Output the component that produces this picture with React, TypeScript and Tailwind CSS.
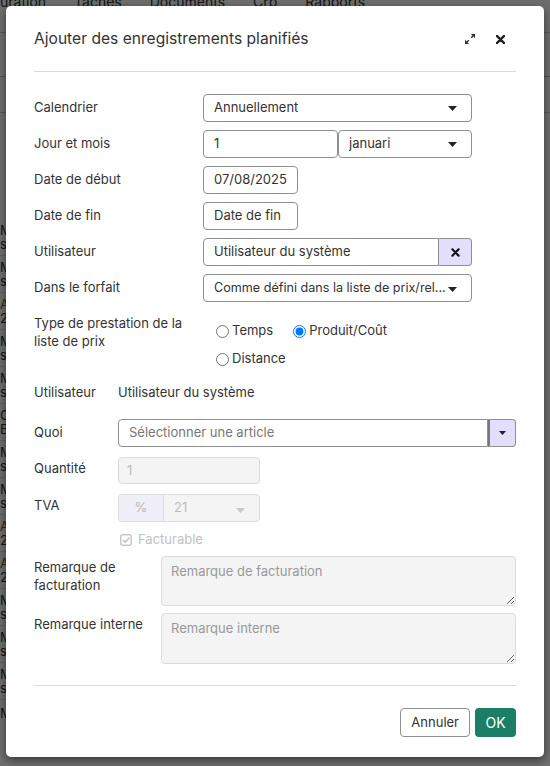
import React from 'react';

const rows = [
  ['Mission', 'statut'], ['Mission', 'statut'], ['Activité', '2025'], ['Mission', 'statut'], ['Mission', 'statut'],
  ['Contrat', 'BT'], ['Mission', 'statut'], ['Mission', 'statut'], ['Activité', '2025'], ['Activité', '2025'],
  ['Mission', 'statut'], ['Mission', 'statut'], ['Mission', 'statut'],
];

function Caret({ light = false }: { light?: boolean }) {
  return (
    <svg width="9" height="5" viewBox="0 0 9 5" className="shrink-0">
      <path d="M0 0 H9 L4.5 5 Z" fill={light ? '#c8c8c8' : '#222'} />
    </svg>
  );
}

function FakeSelect({ value, className = '' }: { value: string; className?: string }) {
  return (
    <div className={`h-[28px] flex items-center justify-between pl-[10px] pr-[14px] border border-[#8f8f8f] rounded-[4px] bg-white ${className}`}>
      <span className="truncate">{value}</span>
      <Caret />
    </div>
  );
}

function FakeInput({ value, className = '' }: { value: string; className?: string }) {
  return (
    <div className={`h-[28px] flex items-center px-[10px] border border-[#8f8f8f] rounded-[4px] bg-white ${className}`}>
      {value}
    </div>
  );
}

function Row({ label, children }: { label: React.ReactNode; children: React.ReactNode }) {
  return (
    <div className="flex">
      <div className="w-[169px] shrink-0 pt-[4px] leading-[18px]">{label}</div>
      <div className="w-[269px] shrink-0">{children}</div>
    </div>
  );
}

export default function App() {
  return (
    <div className="relative w-[550px] h-[766px] overflow-hidden bg-white text-[#222]" style={{ fontFamily: 'Inter, "Noto Sans", sans-serif' }}>
      {/* page behind the dialog */}
      <div className="flex gap-[28px] -mt-[9px] h-[42px] items-start text-[14px] text-[#333] border-b border-[#ccc]">
        <span>uration</span>
        <span>Tâches</span>
        <span>Documents</span>
        <span>Crb</span>
        <span>Rapports</span>
      </div>
      <div className="h-[44px] border-b border-[#bbb]" />
      <div className="h-[36px] border-b border-[#ccc]" />
      <div className="h-[106px]" />
      {rows.map((r, i) => (
        <div key={i} className="w-[20px] h-[37px] overflow-hidden border-b border-[#ddd] text-[13px] leading-[14px] text-[#333] flex flex-col justify-center">
          <span className={r[0] === 'Activité' ? 'text-[#7a5a2a]' : ''}>{r[0].slice(0, 2)}</span>
          <span>{r[1].slice(0, 2)}</span>
        </div>
      ))}
      <div className="text-[13px] text-[#333] pt-[4px]">Mission</div>

      {/* overlay + dialog */}
      <div className="absolute inset-0 bg-black/[0.57] pl-[6px] pt-[6px]">
        <div className="w-[538px] h-[751px] bg-white rounded-[5px] shadow-[0_3px_9px_rgba(0,0,0,0.5)] px-[28px] flex flex-col text-[13px] text-[#333]">
          {/* header */}
          <div className="flex items-center justify-between pt-[21px] pb-[20px] pr-[11px]">
            <div className="text-[15.6px] leading-[24px] text-[#333]">Ajouter des enregistrements planifiés</div>
            <div className="flex items-center gap-[21px]">
              <svg width="10" height="10" viewBox="0 0 12 12">
                <path d="M7 0 H12 V5 Z" fill="#333" />
                <path d="M9.5 2.5 L7.5 4.5" stroke="#333" strokeWidth="1.8" />
                <path d="M0 7 V12 H5 Z" fill="#333" />
                <path d="M2.5 9.5 L4.5 7.5" stroke="#333" strokeWidth="1.8" />
              </svg>
              <svg width="9" height="9" viewBox="0 0 10 10">
                <path d="M1 1 L9 9 M9 1 L1 9" stroke="#222" strokeWidth="2.6" strokeLinecap="round" />
              </svg>
            </div>
          </div>
          <div className="h-px bg-[#d9d9d9]" />

          {/* form */}
          <div className="pt-[22px] flex flex-col gap-[8px]">
            <Row label="Calendrier">
              <FakeSelect value="Annuellement" />
            </Row>
            <Row label="Jour et mois">
              <div className="flex">
                <FakeInput value="1" className="w-[135px]" />
                <FakeSelect value="januari" className="flex-1" />
              </div>
            </Row>
            <Row label="Date de début">
              <FakeInput value="07/08/2025" className="w-[95px]" />
            </Row>
            <Row label="Date de fin">
              <FakeInput value="Date de fin" className="w-[95px]" />
            </Row>
            <Row label="Utilisateur">
              <div className="flex">
                <div className="flex-1 h-[28px] flex items-center px-[10px] border border-[#8f8f8f] rounded-l-[4px] bg-white">Utilisateur du système</div>
                <div className="w-[33px] h-[28px] flex items-center justify-center border border-l-0 border-[#8f8f8f] rounded-r-[4px] bg-[#e2defb]">
                  <svg width="9" height="9" viewBox="0 0 10 10">
                    <path d="M1.5 1.5 L8.5 8.5 M8.5 1.5 L1.5 8.5" stroke="#111" strokeWidth="2.4" strokeLinecap="round" />
                  </svg>
                </div>
              </div>
            </Row>
            <Row label="Dans le forfait">
              <div className="h-[28px] flex items-center pl-[10px] pr-[14px] border border-[#8f8f8f] rounded-[4px] bg-white gap-[3px]">
                <span className="whitespace-nowrap overflow-hidden text-[12.6px]">Comme défini dans la liste de prix/rel...</span>
                <span className="pt-[3px]"><Caret /></span>
              </div>
            </Row>
            <div className="flex">
              <div className="w-[169px] shrink-0 pt-[4px] leading-[18px] pr-[8px]">Type de prestation de la liste de prix</div>
              <div className="pl-[13px] pt-[7px]">
                <div className="flex items-center h-[28px] gap-[20px]">
                  <label className="flex items-center">
                    <input type="radio" name="tp" className="m-0 mr-[3px] w-[13px] h-[13px]" readOnly />Temps
                  </label>
                  <label className="flex items-center">
                    <input type="radio" name="tp" className="m-0 mr-[3px] w-[13px] h-[13px]" defaultChecked />Produit/Coût
                  </label>
                </div>
                <div className="flex items-center h-[28px]">
                  <label className="flex items-center">
                    <input type="radio" name="tp" className="m-0 mr-[3px] w-[13px] h-[13px]" readOnly />Distance
                  </label>
                </div>
              </div>
            </div>
          </div>

          {/* second block */}
          <div className="pt-[10px] flex flex-col">
            <div className="flex h-[20px] items-center">
              <div className="w-[84px]">Utilisateur</div>
              <div>Utilisateur du système</div>
            </div>
            <div className="flex mt-[16px]">
              <div className="w-[84px] pt-[4px]">Quoi</div>
              <div className="flex flex-1">
                <div className="flex-1 h-[28px] flex items-center px-[10px] border border-[#8f8f8f] rounded-l-[4px] text-[#777]">Sélectionner une article</div>
                <div className="w-[28px] h-[28px] flex items-center justify-center border border-l-2 border-[#8f8f8f] border-l-[#777] rounded-r-[4px] bg-[#e2defb]">
                  <svg width="7" height="4" viewBox="0 0 7 4"><path d="M0 0 H7 L3.5 4 Z" fill="#222" /></svg>
                </div>
              </div>
            </div>
            <div className="flex mt-[10px]">
              <div className="w-[84px] pt-[2px]">Quantité</div>
              <div className="w-[142px] h-[27px] flex items-center px-[8px] border border-[#dcdcdc] rounded-[4px] bg-[#f4f4f4] text-[#bbb]">1</div>
            </div>
            <div className="flex mt-[10px]">
              <div className="w-[84px] pt-[2px]">TVA</div>
              <div className="flex w-[142px] h-[28px] border border-[#dcdcdc] rounded-[4px] bg-[#f4f4f4] text-[#bbb]">
                <div className="w-[45px] flex items-center justify-center bg-[#efeef9] border-r border-[#dcdcdc] rounded-l-[4px]">%</div>
                <div className="flex-1 flex items-center justify-between pl-[10px] pr-[14px]">
                  <span>21</span>
                  <span className="pt-[4px]"><Caret light /></span>
                </div>
              </div>
            </div>
            <div className="flex items-center h-[20px] mt-[8px] pl-[86px] text-[#c0c0c0] gap-[6px]">
              <svg width="12" height="12" viewBox="0 0 12 12">
                <rect x="0.75" y="0.75" width="10.5" height="10.5" rx="2" fill="none" stroke="#c8c8c8" strokeWidth="1.5" />
                <path d="M3 6 L5.2 8.2 L9.5 3.5" fill="none" stroke="#c8c8c8" strokeWidth="1.8" />
              </svg>
              <span>Facturable</span>
            </div>
            <div className="flex mt-[6px]">
              <div className="w-[127px] leading-[18px] pt-[2px]">Remarque de facturation</div>
              <textarea readOnly placeholder="Remarque de facturation" className="flex-1 h-[50px] border border-[#dcdcdc] rounded-[4px] bg-[#f4f4f4] px-[9px] py-[5px] text-[13px] placeholder:text-[#999] outline-none" />
            </div>
            <div className="flex mt-[7px]">
              <div className="w-[127px] leading-[18px] pt-[2px]">Remarque interne</div>
              <textarea readOnly placeholder="Remarque interne" className="flex-1 h-[51px] border border-[#dcdcdc] rounded-[4px] bg-[#f4f4f4] px-[9px] py-[5px] text-[13px] placeholder:text-[#999] outline-none" />
            </div>
          </div>

          <div className="h-px bg-[#d9d9d9] mt-[21px]" />
          <div className="flex justify-end gap-[5px] mt-[22px]">
            <button className="h-[29px] px-[10px] border border-[#8f8f8f] rounded-[4px] bg-white text-[13px] text-[#333]">Annuler</button>
            <button className="h-[29px] w-[41px] rounded-[4px] bg-[#1b7f66] text-[14px] text-white">OK</button>
          </div>
        </div>
      </div>
    </div>
  );
}
